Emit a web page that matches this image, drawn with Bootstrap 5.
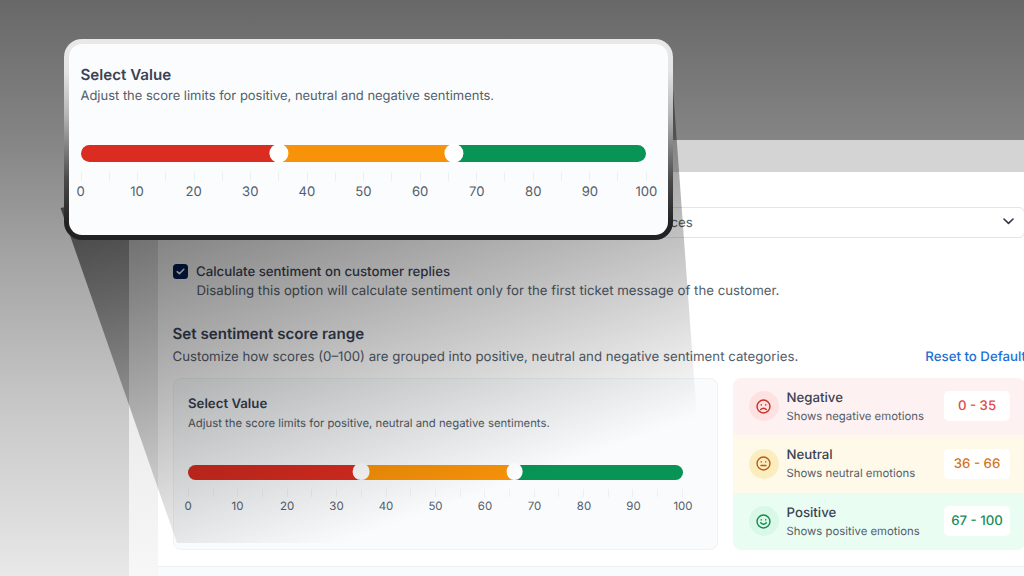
<!DOCTYPE html>
<html lang="en">
  <head>
    <meta charset="UTF-8" />
    <meta name="viewport" content="width=device-width, initial-scale=1.0" />
    <title>Sentiment Settings</title>
    <link
      href="https://cdn.jsdelivr.net/npm/bootstrap@5.3.0/dist/css/bootstrap.min.css"
      rel="stylesheet"
    />
    <style>
      body {
        height: 576px;
        font-family: Inter, "Liberation Sans", sans-serif;
        text-rendering: geometricPrecision;
        color: #545e6b;
        background: linear-gradient(#686868 0, #858585 140px, #a2a2a2 250px, #c6c6c6 400px, #e8e8e8 576px);
      }

      .app {
        padding: 140px 0 0 129px;
        height: 576px;
      }

      .topbar {
        height: 32px;
        background: #d4d4d4;
      }

      .side {
        width: 29px;
        background: linear-gradient(#dcdcdc, #f7f7f7);
      }

      .content {
        width: 867px;
        padding: 35px 0 0 14.5px;
      }

      .inner {
        width: 852px;
      }

      .source {
        height: 30.5px;
        border: 1px solid #e2e4e6;
        border-radius: 6px;
        padding: 0 10px 0 497px;
        font-size: 13.24px;
      }

      .source span {
        padding-top: 3px;
      }

      .check {
        width: 15.5px;
        height: 15.5px;
        border-radius: 3.5px;
        background: #021d52;
      }

      .dark {
        color: #3a4254;
        font-weight: 500;
      }

      .opt {
        margin-top: 23.5px;
        font-size: 13.24px;
        line-height: 20px;
      }

      .opt span:last-child {
        padding-top: 1px;
      }

      .desc {
        font-size: 13.24px;
        line-height: 19px;
      }

      .section-title {
        margin-top: 22.5px;
        font-size: 15.14px;
        font-weight: 600;
        line-height: 20px;
      }

      .section-desc {
        margin-top: 4px;
      }

      .reset {
        color: #1d6fd6;
        font-weight: 500;
        text-decoration: none;
        margin-right: -1.5px;
      }

      .range-row {
        margin-top: 11px;
      }

      .range-card {
        width: 545.5px;
        height: 172.5px;
        padding: 15px 34px 0 14.5px;
        background: #f9fbfc;
        border: 1px solid #f0f2f4;
        border-radius: 8px;
        font-size: 12px;
      }

      /* slider sizes are in em so the zoomed copy scales with its font size */
      .range-title {
        font-size: 1.103em;
        font-weight: 600;
        line-height: 1.511em;
      }

      .range-desc {
        font-size: 0.945em;
        line-height: 1.587em;
        white-space: nowrap;
      }

      .range-track {
        height: 1.25em;
        margin-top: 2.79em;
        border-radius: 1em;
      }

      .range-track div:first-child {
        border-radius: 1em 0 0 1em;
      }

      .range-track div:nth-child(3) {
        border-radius: 0 1em 1em 0;
      }

      .knob {
        position: absolute;
        top: 50%;
        width: 1.4em;
        height: 1.4em;
        border-radius: 50%;
        background: #fff;
        transform: translate(-50%, -53%);
      }

      .ticks {
        margin-top: 0.72em;
        height: 0.66em;
      }

      .ticks span {
        width: 1px;
        background: #edf0f2;
      }

      .nums {
        margin-top: 0.12em;
        font-size: 0.955em;
        line-height: 1.4em;
      }

      .nums span {
        width: 0;
      }

      .levels {
        width: 291.5px;
        height: 172.5px;
        border-radius: 8px;
        overflow: hidden;
      }

      .level {
        padding: 0 14.5px 0 15.5px;
      }

      .level p {
        margin: 0;
        font-size: 11.35px;
        line-height: 17px;
      }

      .level h6 {
        margin: 0;
        padding-top: 1px;
        font-size: 13.24px;
        line-height: 19px;
      }

      .face {
        width: 30px;
        height: 30px;
      }

      .face svg {
        width: 15px;
        height: 15px;
      }

      .score {
        width: 66px;
        height: 30px;
        padding-top: 2px;
        border-radius: 5px;
        background: #fff;
        font-size: 13.24px;
        font-weight: 500;
      }

      .next-panel {
        margin: 15.5px 0 0 -14.5px;
        width: 867px;
        height: 14px;
        background: #f8fbfc;
        border-top: 1px solid #eceff1;
      }

      .beam {
        position: absolute;
        left: 0;
        top: 0;
      }

      .lens {
        position: absolute;
        left: 64px;
        top: 39px;
        width: 609px;
        height: 201px;
        padding: 19.5px 21.5px 0 11.5px;
        border: 5px solid transparent;
        border-radius: 18px;
        background: linear-gradient(#fafcfd, #fafcfd) padding-box,
          linear-gradient(#e9e9e9 0, #e4e4e4 16%, #b5b5b5 38%, #4a4a4a 70%, #222 92%) border-box;
        font-size: 13.72px;
      }
    </style>
  </head>

  <body class="overflow-hidden position-relative">
    <div class="app">
      <div class="topbar"></div>
      <div class="d-flex">
        <div class="side flex-shrink-0"></div>
        <div class="content bg-white flex-shrink-0">
          <div class="inner">
            <div class="source d-flex align-items-center justify-content-between">
              <span>ces</span>
              <svg width="12" height="12" viewBox="0 0 12 12" fill="none" stroke="#2f3947" stroke-width="1.6" stroke-linecap="round" stroke-linejoin="round">
                <path d="M2 3 6.5 7.4 11 3" />
              </svg>
            </div>

            <div class="d-flex align-items-center opt dark">
              <span class="check d-flex align-items-center justify-content-center me-2">
                <svg width="11" height="11" viewBox="0 0 11 11" fill="none" stroke="#fff" stroke-width="1.6" stroke-linecap="round" stroke-linejoin="round">
                  <path d="M2.2 5.7 4.4 7.7 8.8 3.3" />
                </svg>
              </span>
              <span>Calculate sentiment on customer replies</span>
            </div>
            <div class="desc ps-4">Disabling this option will calculate sentiment only for the first ticket message of the customer.</div>

            <div class="section-title dark">Set sentiment score range</div>
            <div class="d-flex justify-content-between desc section-desc">
              <span>Customize how scores (0–100) are grouped into positive, neutral and negative sentiment categories.</span>
              <a href="#" class="reset">Reset to Default</a>
            </div>

            <div class="d-flex justify-content-between range-row">
              <div class="range-card">
                <div class="range"></div>
              </div>
              <div class="levels d-flex flex-column" id="levels"></div>
            </div>
            <div class="next-panel"></div>
          </div>
        </div>
      </div>
    </div>

    <svg class="beam" width="1024" height="576" viewBox="0 0 1024 576">
      <defs>
        <linearGradient id="fade" gradientUnits="userSpaceOnUse" x1="109" y1="88" x2="278" y2="566">
          <stop offset="0" stop-color="#000" stop-opacity=".7" />
          <stop offset="1" stop-color="#000" stop-opacity="0" />
        </linearGradient>
      </defs>
      <path d="M60.5 208 672 75 697 418 697 543 177 543Z" fill="url(#fade)" />
    </svg>

    <div class="lens">
      <div class="range"></div>
    </div>

    <script src="https://cdn.jsdelivr.net/npm/bootstrap@5.3.0/dist/js/bootstrap.bundle.min.js"></script>
    <script>
      const low = 35;
      const high = 66;

      const levels = [
        { name: "Negative", score: "0 - 35", bg: "#fef1f1", dot: "#fde2e1", line: "#c5322b", text: "#dd4a48", mouth: "M5 11.2q3-2.8 6 0" },
        { name: "Neutral", score: "36 - 66", bg: "#fef9e9", dot: "#fcedbf", line: "#bb5a1c", text: "#d2741c", mouth: "M5.3 10.2h5.4" },
        { name: "Positive", score: "67 - 100", bg: "#eafdf3", dot: "#d9f8e7", line: "#15894f", text: "#178c56", mouth: "M5 9.4q3 3.2 6 0" },
      ];

      function showRange(box) {
        let ticks = "";
        let nums = "";
        for (let i = 0; i <= 100; i += 5) {
          ticks += "<span></span>";
          if (i % 10 === 0) {
            nums += `<span class="d-flex justify-content-center">${i}</span>`;
          }
        }
        box.innerHTML = `
          <div class="range-title dark">Select Value</div>
          <div class="range-desc">Adjust the score limits for positive, neutral and negative sentiments.</div>
          <div class="range-track d-flex position-relative">
            <div style="width: ${low}%; background: #da2c20"></div>
            <div style="width: ${high - low}%; background: #f79209"></div>
            <div style="width: ${100 - high}%; background: #079455"></div>
            <span class="knob" style="left: ${low}%"></span>
            <span class="knob" style="left: ${high}%"></span>
          </div>
          <div class="ticks d-flex justify-content-between">${ticks}</div>
          <div class="nums d-flex justify-content-between">${nums}</div>`;
      }

      document.querySelectorAll(".range").forEach(showRange);

      document.querySelector("#levels").innerHTML = levels
        .map(
          (l) => `
          <div class="level d-flex align-items-center flex-fill" style="background: ${l.bg}">
            <span class="face rounded-circle d-flex align-items-center justify-content-center me-2" style="background: ${l.dot}">
              <svg viewBox="0 0 16 16" fill="none" stroke="${l.line}" stroke-width="1.5" stroke-linecap="round">
                <circle cx="8" cy="8" r="6.9" />
                <path d="${l.mouth}M5.6 6.1v.3M10.4 6.1v.3" />
              </svg>
            </span>
            <div class="flex-fill">
              <h6 class="dark">${l.name}</h6>
              <p>Shows ${l.name.toLowerCase()} emotions</p>
            </div>
            <span class="score d-flex align-items-center justify-content-center" style="color: ${l.text}">${l.score}</span>
          </div>`
        )
        .join("");
    </script>
  </body>
</html>
